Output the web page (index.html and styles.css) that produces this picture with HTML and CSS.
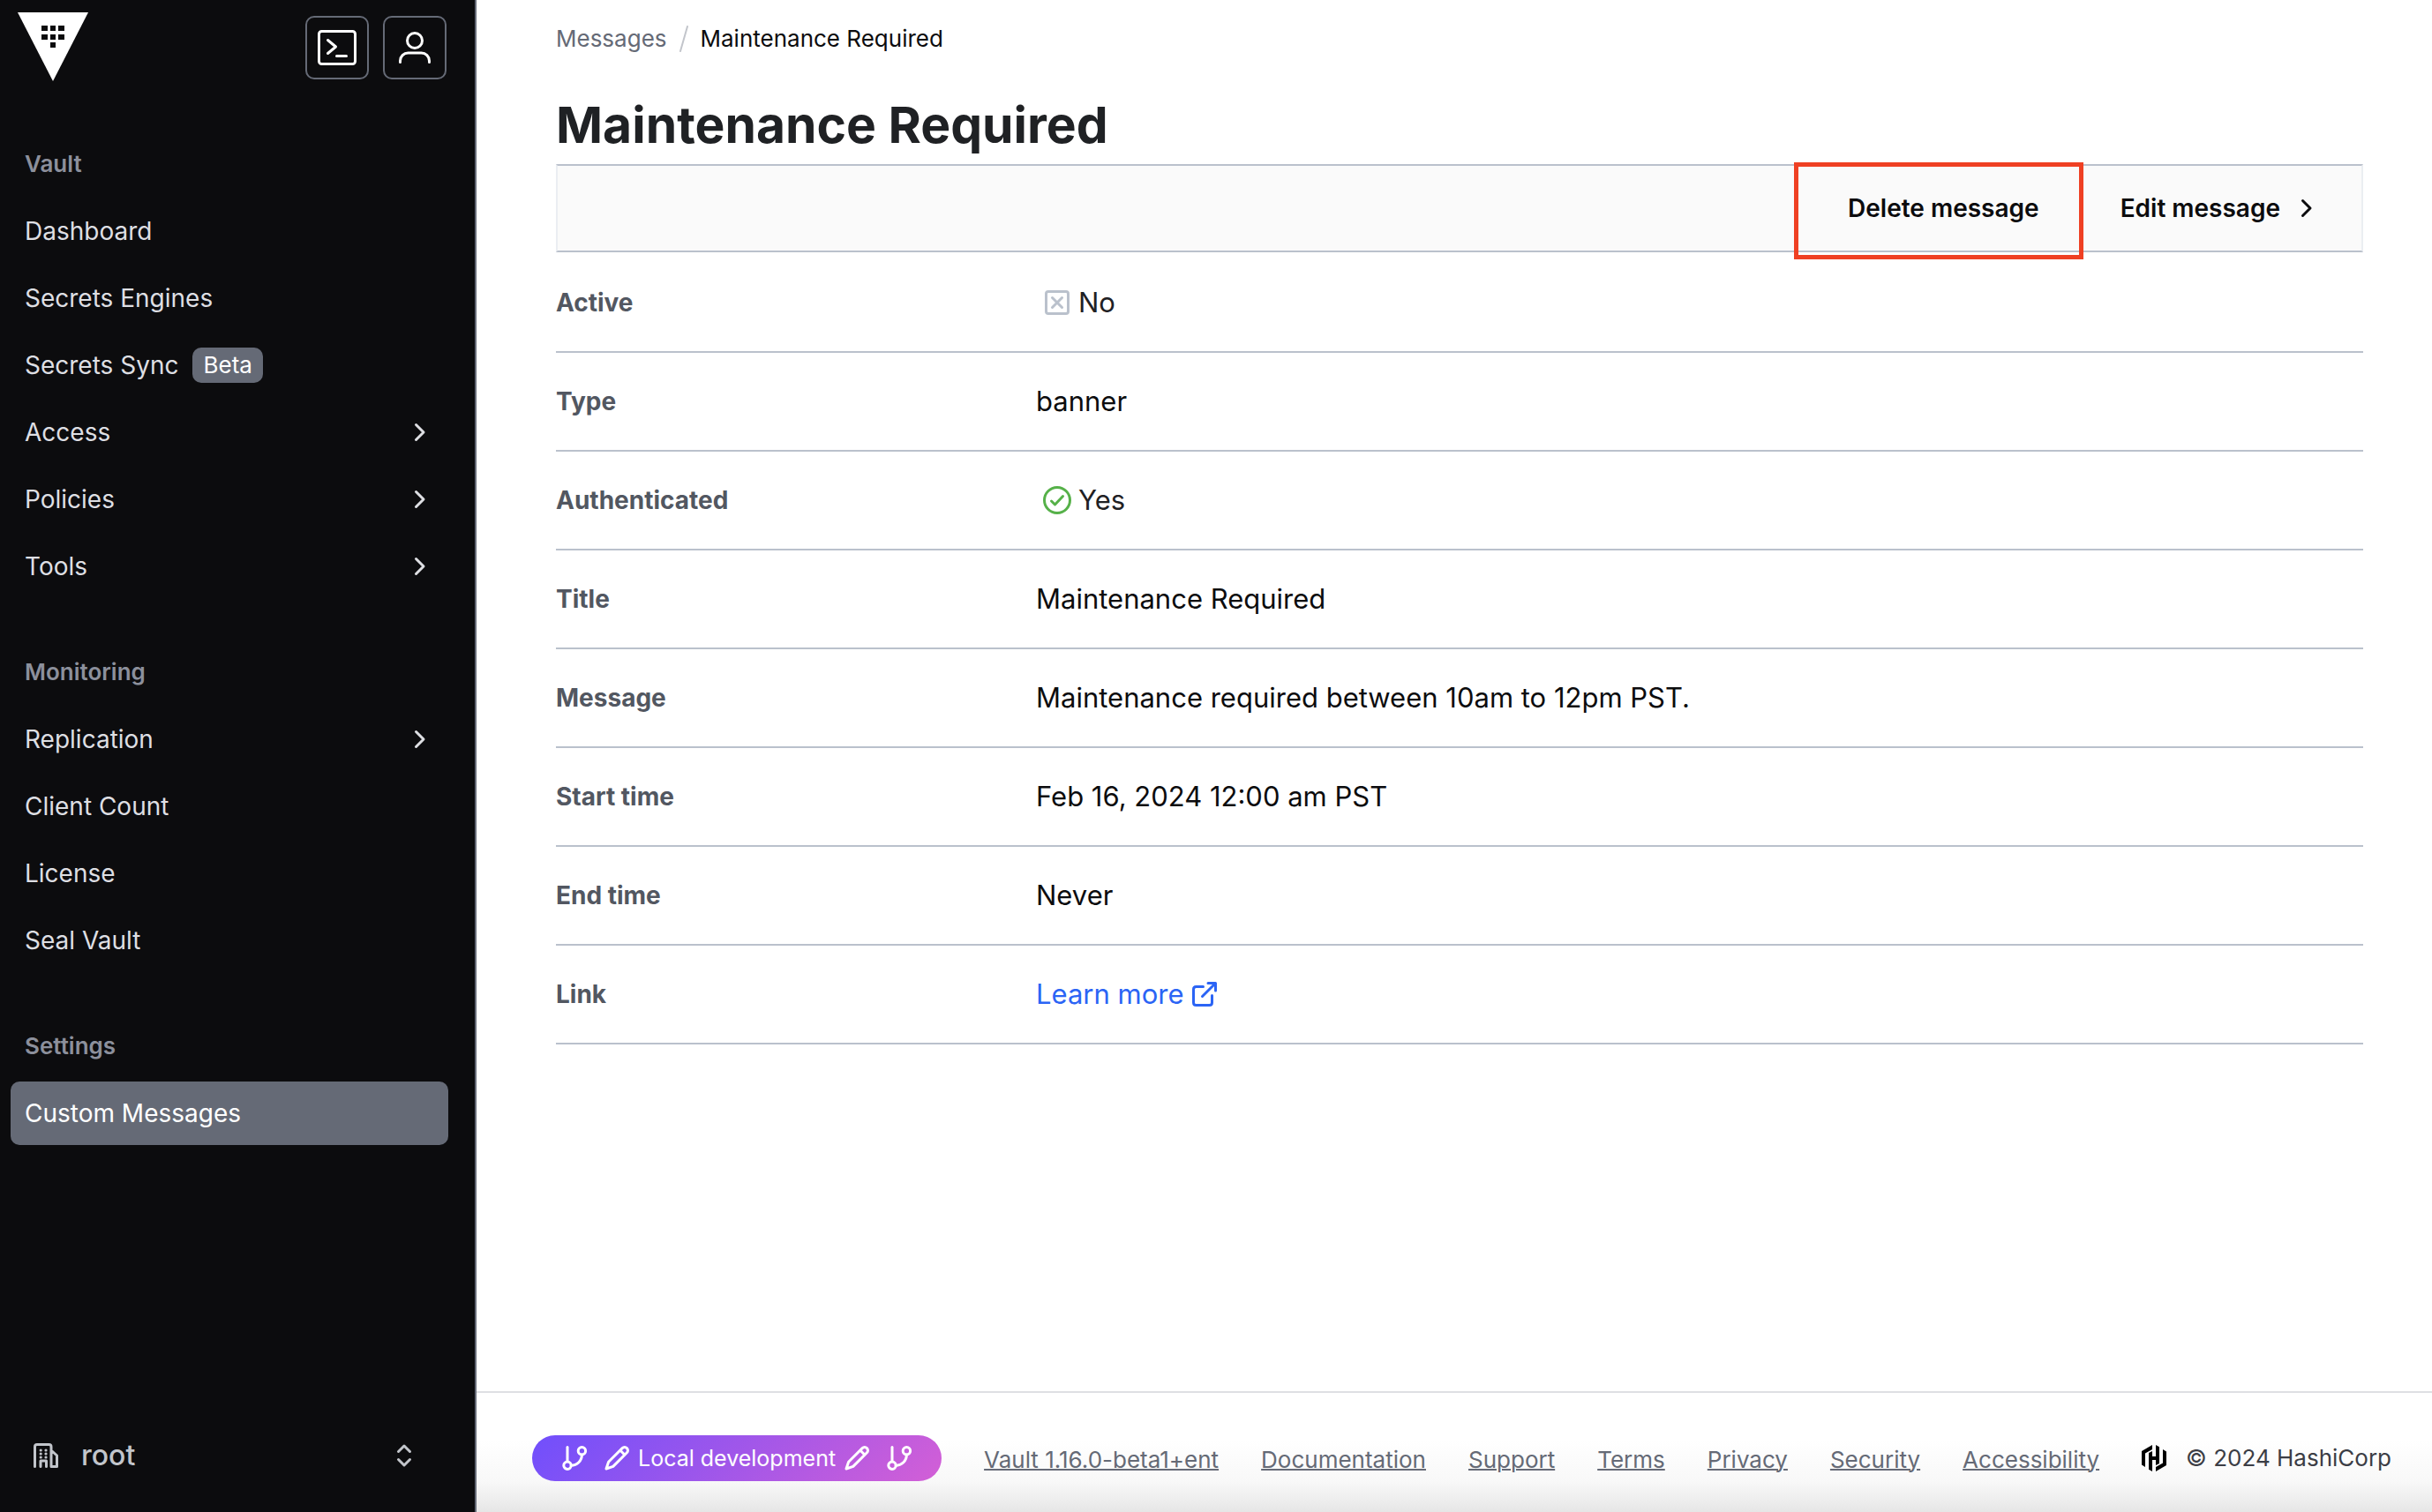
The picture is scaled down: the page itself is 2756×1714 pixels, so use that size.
FILE: index.html
```html
<!DOCTYPE html>
<html lang="en">
<head>
<meta charset="utf-8">
<title>Maintenance Required - Vault</title>
<link rel="stylesheet" href="styles.css">
</head>
<body>
<svg class="sprite" aria-hidden="true">
  <symbol id="chevron" viewBox="0 0 16 16"><path d="M5.750 3.750 10 8l-4.250 4.250"/></symbol>
  <symbol id="branch" viewBox="0 0 16 16"><path d="M4 1.750v8"/><circle cx="12.200" cy="3.900" r="2.100"/><circle cx="4" cy="12.100" r="2.100"/><path d="M12.200 6c0 3.500-2.700 6.100-6.100 6.100"/></symbol>
  <symbol id="pencil" viewBox="0 0 16 16"><path d="M11.100 2.300a1.800 1.800 0 0 1 2.600 2.600L5.900 12.700 2 14l1.300-3.900zM9.900 3.500 12.500 6.100"/></symbol>
</svg>
<div class="app">
  <aside class="sidebar">
    <header class="sidebar-head">
      <a href="#" aria-label="Vault home"><svg class="logo" viewBox="0 0 80 78"><path fill="#fff" d="M0 0h80L40 78z"/><path fill="#0c0c0e" d="M27 15h7v6h-7zm10 0h6v6h-6zm9 0h7v6h-7zM27 25h7v6h-7zm10 0h6v6h-6zm9 0h7v6h-7zM37 34h6v6h-6z"/></svg></a>
      <div class="head-actions">
        <button class="icon-button" aria-label="Console"><svg class="icon-lg" viewBox="0 0 24 24"><rect x="1.750" y="2.750" width="20.500" height="18.500" rx="1.500"/><path d="M6.750 7.750 11.250 11.500l-4.500 3.750M11.750 16.700h5.500"/></svg></button>
        <button class="icon-button" aria-label="User menu"><svg class="icon-lg" viewBox="0 0 24 24"><circle cx="12" cy="8" r="4.250"/><path d="M3.750 20.250v-.750a4.500 4.500 0 0 1 4.500-4.500h7.500a4.500 4.500 0 0 1 4.500 4.500v.750"/></svg></button>
      </div>
    </header>
    <nav class="nav" aria-label="Main">
      <section class="nav-group">
        <h2 class="nav-title">Vault</h2>
        <a class="nav-item" href="#">Dashboard</a>
        <a class="nav-item" href="#">Secrets Engines</a>
        <a class="nav-item" href="#">Secrets Sync <span class="badge">Beta</span></a>
        <a class="nav-item" href="#">Access <svg class="icon nav-arrow"><use href="#chevron"/></svg></a>
        <a class="nav-item" href="#">Policies <svg class="icon nav-arrow"><use href="#chevron"/></svg></a>
        <a class="nav-item" href="#">Tools <svg class="icon nav-arrow"><use href="#chevron"/></svg></a>
      </section>
      <section class="nav-group">
        <h2 class="nav-title">Monitoring</h2>
        <a class="nav-item" href="#">Replication <svg class="icon nav-arrow"><use href="#chevron"/></svg></a>
        <a class="nav-item" href="#">Client Count</a>
        <a class="nav-item" href="#">License</a>
        <a class="nav-item" href="#">Seal Vault</a>
      </section>
      <section class="nav-group">
        <h2 class="nav-title">Settings</h2>
        <a class="nav-item active" href="#" aria-current="page">Custom Messages</a>
      </section>
    </nav>
    <button class="namespace">
      <svg class="icon" viewBox="0 0 16 16"><path d="M1.750 14.250V3c0-.800.500-1.250 1.250-1.250h6.750c.750 0 1.250.500 1.250 1.250v11.250h3.250V8L11.500 5.500M5 14.250V11h3.250v3.250"/><path d="M5.100 5h.010M8 5h.010M5.100 7h.010M8 7h.010M5.100 9h.010M8 9h.010" stroke-width="1.600"/></svg>
      <span>root</span>
      <svg class="icon namespace-arrow" viewBox="0 0 16 16"><path d="M4.750 5.750 8 2.500l3.250 3.250M4.750 10.250 8 13.500l3.250-3.250"/></svg>
    </button>
  </aside>
  <div class="page">
    <main class="content">
      <nav class="breadcrumb" aria-label="Breadcrumb">
        <a href="#">Messages</a>
        <svg class="slash" viewBox="0 0 10 30"><path d="M9 1 1 29"/></svg>
        <span>Maintenance Required</span>
      </nav>
      <h1 class="title">Maintenance Required</h1>
      <div class="toolbar">
        <button class="tool delete">Delete message</button>
        <a class="tool edit" href="#">Edit message <svg class="icon"><use href="#chevron"/></svg></a>
      </div>
      <table class="details">
        <tr><th scope="row">Active</th><td><span class="flag"><svg class="icon no" viewBox="0 0 16 16"><rect x="1.750" y="1.750" width="12.500" height="12.500" rx="1.250"/><path d="m5.250 5.250 5.500 5.500m0-5.500-5.500 5.500"/></svg>No</span></td></tr>
        <tr><th scope="row">Type</th><td>banner</td></tr>
        <tr><th scope="row">Authenticated</th><td><span class="flag"><svg class="icon yes" viewBox="0 0 16 16"><circle cx="8" cy="8" r="7.250"/><path d="m4.750 8.500 2 2 4.500-4.750"/></svg>Yes</span></td></tr>
        <tr><th scope="row">Title</th><td>Maintenance Required</td></tr>
        <tr><th scope="row">Message</th><td>Maintenance required between 10am to 12pm PST.</td></tr>
        <tr><th scope="row">Start time</th><td>Feb 16, 2024 12:00 am PST</td></tr>
        <tr><th scope="row">End time</th><td>Never</td></tr>
        <tr><th scope="row">Link</th><td><a class="learn" href="#">Learn more <svg class="icon" viewBox="0 0 16 16"><path d="M12.250 8.750v4c0 .800-.500 1.500-1.500 1.500h-7.500c-1 0-1.500-.700-1.500-1.500v-7.500c0-.800.500-1.500 1.500-1.500h4M10 1.750h4.250V6M14 2 6.750 9.250"/></svg></a></td></tr>
      </table>
    </main>
    <footer class="footer">
      <span class="env"><svg class="icon"><use href="#branch"/></svg><span class="env-label"><svg class="icon"><use href="#pencil"/></svg>Local development<svg class="icon"><use href="#pencil"/></svg></span><svg class="icon"><use href="#branch"/></svg></span>
      <a href="#">Vault 1.16.0-beta1+ent</a>
      <a href="#">Documentation</a>
      <a href="#">Support</a>
      <a href="#">Terms</a>
      <a href="#">Privacy</a>
      <a href="#">Security</a>
      <a href="#">Accessibility</a>
      <span class="legal"><svg class="hashi" viewBox="0 0 28 30"><path d="M12 0 0 7v15.500L4 25V9.500L12 5zM16 0l4 2.300V21l-4 2v-6h-4v13l-4-2.300V9l4-2v6h4zM16 30l12-7V7.500L24 5v15.500L16 25z"/></svg>© 2024 HashiCorp</span>
    </footer>
  </div>
</div>
</body>
</html>
```
FILE: styles.css
```css
* { box-sizing: border-box; }
body { margin: 0; background: #fff; color: #0c0c0e; font-family: Inter, "Liberation Sans", sans-serif; font-size: 31px; line-height: 40px; }
a { color: inherit; text-decoration: none; }
button { margin: 0; padding: 0; border: 0; background: none; color: inherit; font: inherit; }
svg { flex: none; fill: none; stroke: currentColor; stroke-width: 1.5; stroke-linecap: round; stroke-linejoin: round; }
.sprite { display: none; }
.icon { width: 32px; height: 32px; }
.icon-lg { width: 48px; height: 48px; }
.app { display: flex; min-height: 100vh; }

.sidebar { display: flex; flex: none; flex-direction: column; width: 540px; padding: 14px 30px 32px 12px; border-right: 2px solid #656a76; background: #0c0c0e; color: #dedfe3; }
.sidebar-head { display: flex; justify-content: space-between; height: 136px; padding: 0 2px 0 8px; }
.logo { display: block; width: 80px; height: 78px; stroke: none; }
.head-actions { display: flex; gap: 16px; padding-top: 4px; }
.icon-button { display: flex; align-items: center; justify-content: center; width: 72px; height: 72px; border: 2px solid #656a76; border-radius: 10px; color: #fff; }
.nav { display: flex; flex: 1; flex-direction: column; gap: 48px; }
.nav-group { display: flex; flex-direction: column; gap: 4px; }
.nav-title, .nav-item { display: flex; align-items: center; height: 72px; margin: 0; padding: 0 16px; }
.nav-title { color: #8c909c; font-size: 26px; font-weight: 600; }
.nav-item { border-radius: 10px; font-size: 28px; }
.nav-item.active { background: #656a76; color: #fff; }
.nav-arrow { margin-left: auto; }
.badge { margin-left: 16px; padding: 0 12px; border-radius: 10px; background: #656a76; color: #fff; font-size: 26px; }
.namespace { display: flex; align-items: center; gap: 24px; height: 64px; padding: 0 34px 0 24px; color: #c2c5cb; font-size: 32px; font-weight: 500; }
.namespace-arrow { margin-left: auto; }

.page { display: flex; flex: 1; flex-direction: column; min-width: 0; }
.content { flex: 1; padding: 24px 78px 40px 90px; }
.breadcrumb { display: flex; align-items: center; gap: 14px; font-size: 26px; }
.breadcrumb a { color: #656a76; }
.slash { width: 10px; height: 30px; color: #c2c5cb; stroke-width: 2; }
.title { margin: 40px 0 6px; color: #1f2124; font-size: 57px; font-weight: 700; line-height: 76px; }
.toolbar { display: flex; justify-content: flex-end; height: 100px; border: 2px solid #ebeef2; border-top-color: #bac1cc; border-bottom-color: #bac1cc; background: #fafafa; }
.tool { position: relative; display: flex; align-items: center; gap: 14px; padding: 0 46px; font-size: 28px; font-weight: 600; }
.delete::after { content: ""; position: absolute; inset: -4px -4px -10px -15px; border: 5px solid #ef4023; }
.details { width: 100%; margin-top: 2px; border-spacing: 0; }
.details th, .details td { height: 112px; padding: 0; border-bottom: 2px solid #bac1cc; }
.details th { width: 544px; color: #525761; font-size: 28px; font-weight: 700; text-align: left; }
.flag, .learn { display: flex; align-items: center; gap: 8px; }
.flag { padding-left: 8px; color: #1f2124; }
.no { color: #bac1cc; }
.yes { color: #56b149; }
.learn { color: #2b64f5; }

.footer { display: flex; align-items: center; gap: 48px; height: 137px; padding: 12px 52px 0 63px; border-top: 2px solid #dedfe3; background: linear-gradient(#fff 40%, #f8f8f8 75%, #e6e6e6); color: #656a76; font-size: 26px; white-space: nowrap; }
.footer a { padding-top: 4px; text-decoration: underline; text-decoration-thickness: 2px; }
.env { display: flex; align-items: center; justify-content: space-between; gap: 16px; padding: 6px 32px; border-radius: 26px; background: linear-gradient(135deg, #704ffc, #d35fd6); color: #fff; font-size: 25px; }
.env-label { display: flex; align-items: center; gap: 8px; }
.legal { display: flex; align-items: center; gap: 22px; margin-left: auto; color: #3b3d45; }
.hashi { width: 28px; height: 30px; fill: #000; stroke: none; }
```
